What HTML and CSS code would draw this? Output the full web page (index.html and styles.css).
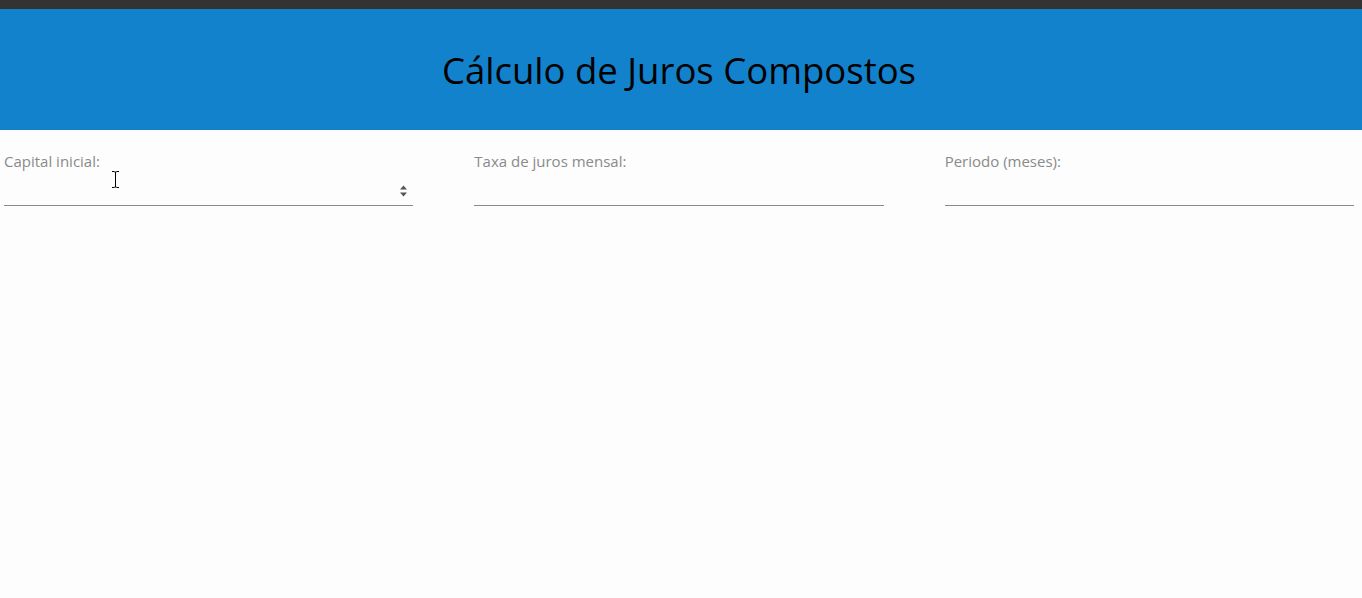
FILE: index.html
```html
<!DOCTYPE html>
<html lang="pt">
<head>
<meta charset="utf-8">
<title>Cálculo de Juros Compostos</title>
<link rel="stylesheet" href="styles.css">
</head>
<body>
<div class="topbar"></div>
<header class="header">
  <h1 class="title">Cálculo de Juros Compostos</h1>
</header>
<main class="form">
  <div class="field">
    <label class="label" for="capital">Capital inicial:</label>
    <div class="input-wrap">
      <input class="input" id="capital" type="text">
      <svg class="spinner" width="9" height="14" viewBox="0 0 9 14"><path d="M1 5.5 L4.5 1.5 L8 5.5 Z M1 8.5 L4.5 12.5 L8 8.5 Z" fill="#555"/></svg>
      <svg class="ibeam" width="9" height="17" viewBox="0 0 9 17"><path d="M1 0.5 H3.5 M5.5 0.5 H8 M4.5 1 V16 M1 16.5 H3.5 M5.5 16.5 H8 M3.5 1 H5.5 M3.5 16 H5.5" stroke="#000" stroke-width="1" fill="none"/></svg>
    </div>
  </div>
  <div class="field">
    <label class="label" for="taxa">Taxa de juros mensal:</label>
    <div class="input-wrap"><input class="input" id="taxa" type="text"></div>
  </div>
  <div class="field">
    <label class="label" for="periodo">Periodo (meses):</label>
    <div class="input-wrap"><input class="input" id="periodo" type="text"></div>
  </div>
</main>
</body>
</html>
```
FILE: styles.css
```css
html, body {
  margin: 0;
  padding: 0;
  background: #fdfdfd;
  font-family: "Open Sans", "Noto Sans", sans-serif;
}
.topbar {
  height: 9px;
  background: #333333;
}
.header {
  height: 121px;
  background: #1282cc;
  display: flex;
  align-items: center;
  justify-content: center;
  padding-right: 4px;
}
.title {
  margin: 0;
  font-family: "Open Sans", "Noto Sans", sans-serif;
  font-weight: 400;
  font-size: 36.5px;
  line-height: 44px;
  color: #000;
}
.form {
  display: flex;
  gap: 61px;
  padding: 21px 8px 0 4px;
}
.field {
  flex: 1;
  display: flex;
  flex-direction: column;
}
.label {
  font-size: 15px;
  color: #8a8a8a;
  line-height: 20px;
}
.input-wrap {
  position: relative;
}
.input {
  display: block;
  width: 100%;
  box-sizing: border-box;
  height: 35px;
  border: none;
  border-bottom: 1px solid #8a8a8a;
  background: transparent;
  outline: none;
  font: inherit;
  padding: 0;
}
.spinner {
  position: absolute;
  right: 5px;
  top: 13px;
}
.ibeam {
  position: absolute;
  left: 107px;
  top: 0;
}
```
